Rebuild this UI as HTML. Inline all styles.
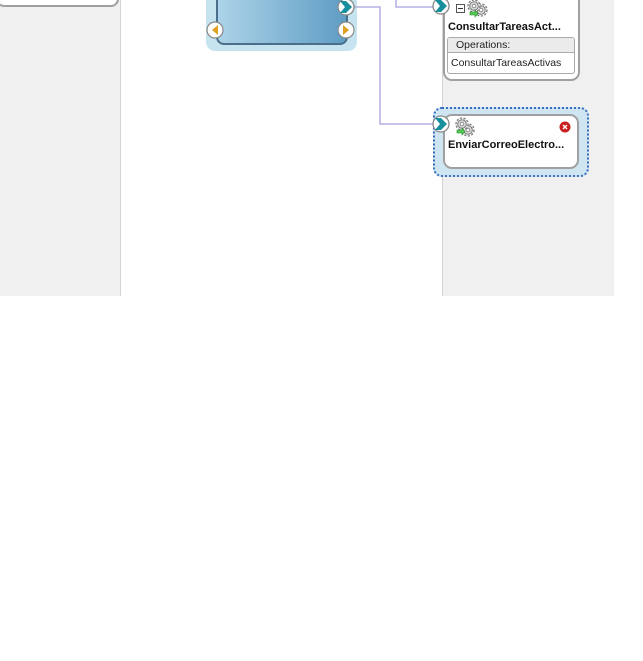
<!DOCTYPE html>
<html><head><style>
html,body{margin:0;padding:0;background:#fff;width:643px;height:661px;overflow:hidden;font-family:"Liberation Sans",sans-serif;}
.abs{position:absolute;box-sizing:border-box;}
</style></head><body>
<div class="abs" style="left:0;top:0;width:121px;height:296px;background:#f0f0f0;border-right:1px solid #d4d4d4"></div>
<div class="abs" style="left:442px;top:0;width:172px;height:296px;background:#f0f0f0;border-left:1px solid #d4d4d4"></div>
<div class="abs" style="left:-4px;top:-10px;width:123px;height:17px;background:#fff;border:2px solid #a0a0a0;border-radius:0 0 8px 8px"></div>
<div class="abs" style="left:206px;top:-10px;width:151px;height:61px;background:#c6e4f0;border-radius:0 0 9px 9px"></div>
<div class="abs" style="left:216px;top:-10px;width:132px;height:55px;background:linear-gradient(to right,#acd3e8,#5f9dc4);border:2px solid #4b6f8b;border-radius:0 0 8px 8px"></div>
<svg class="abs" style="left:0;top:0" width="643" height="300">
<polyline points="354,7 380,7 380,124 434,124" fill="none" stroke="#b4b0e0" stroke-width="1.5"/>
<polyline points="396,0 396,7 434,7" fill="none" stroke="#b4b0e0" stroke-width="1.5"/>
</svg>
<div class="abs" style="left:443px;top:-10px;width:137px;height:91px;background:#fff;border:2px solid #a0a0a0;border-radius:0 0 9px 9px"></div>
<div class="abs" style="left:456px;top:4px;width:9px;height:9px;border:1px solid #555;background:#fff"><div style="margin:3px 1px;height:1px;background:#333"></div></div>
<div class="abs" style="left:448px;top:21px;font-size:11px;font-weight:bold;color:#111">ConsultarTareasAct...</div>
<div class="abs" style="left:447px;top:37px;width:128px;height:37px;border:1px solid #aaa;border-radius:3px;overflow:hidden">
<div style="height:14px;background:#ebebeb;border-bottom:1px solid #aaa;font-size:10.5px;padding-left:8px;line-height:14px;color:#222">Operations:</div>
<div style="font-size:10.5px;padding-left:3px;line-height:20px;color:#222">ConsultarTareasActivas</div>
</div>
<div class="abs" style="left:433px;top:107px;width:156px;height:70px;background:#cfe6f2;border:2px dotted #3a6fc0;border-radius:9px"></div>
<div class="abs" style="left:443px;top:114px;width:136px;height:55px;background:#fff;border:2px solid #a0a0a0;border-radius:9px"></div>
<div class="abs" style="left:448px;top:139px;font-size:11px;font-weight:bold;color:#111">EnviarCorreoElectro...</div>
<svg class="abs" style="left:0;top:0" width="643" height="300">
<defs>
<g id="gear">
<circle cx="0" cy="0" r="6" fill="#fff" stroke="#777" stroke-width="1.3" stroke-dasharray="2.2 1.5"/>
<circle cx="0" cy="0" r="4.3" fill="#ddd" stroke="#777" stroke-width="1"/>
<circle cx="0" cy="0" r="1.8" fill="#fff" stroke="#777" stroke-width="0.8"/>
</g>
<g id="port">
<circle cx="0" cy="0" r="8" fill="#fff" stroke="#888" stroke-width="1.3"/>
<path d="M-6,-6 h6 l6,6 l-6,6 h-6 l5,-6z" fill="#178f9c"/>
</g>
</defs>
<use href="#port" x="346" y="7"/>
<use href="#port" x="441" y="6"/>
<use href="#port" x="441" y="124"/>
<circle cx="215" cy="30" r="8" fill="#fff" stroke="#888" stroke-width="1.2"/>
<circle cx="346" cy="30" r="8" fill="#fff" stroke="#888" stroke-width="1.2"/>
<path d="M218,25 v10 l-6,-5z" fill="#e0a020"/>
<path d="M343,25 v10 l6,-5z" fill="#e0a020"/>
<use href="#gear" x="481" y="10"/>
<use href="#gear" x="468" y="130"/>
<use href="#gear" x="474" y="6" transform="scale(1)"/>
<use href="#gear" x="462" y="124"/>
<path d="M470,12 h5 v-2 l3,3.5 l-3,3.5 v-2 h-5z" fill="#5c5" stroke="#282" stroke-width="0.6"/>
<path d="M457,130 h5 v-2 l3,3.5 l-3,3.5 v-2 h-5z" fill="#5c5" stroke="#282" stroke-width="0.6"/>
<circle cx="565" cy="127" r="5.5" fill="#c82020"/>
<path d="M563,125 l4,4 M567,125 l-4,4" stroke="#fff" stroke-width="1.4"/>
</svg>
</body></html>
